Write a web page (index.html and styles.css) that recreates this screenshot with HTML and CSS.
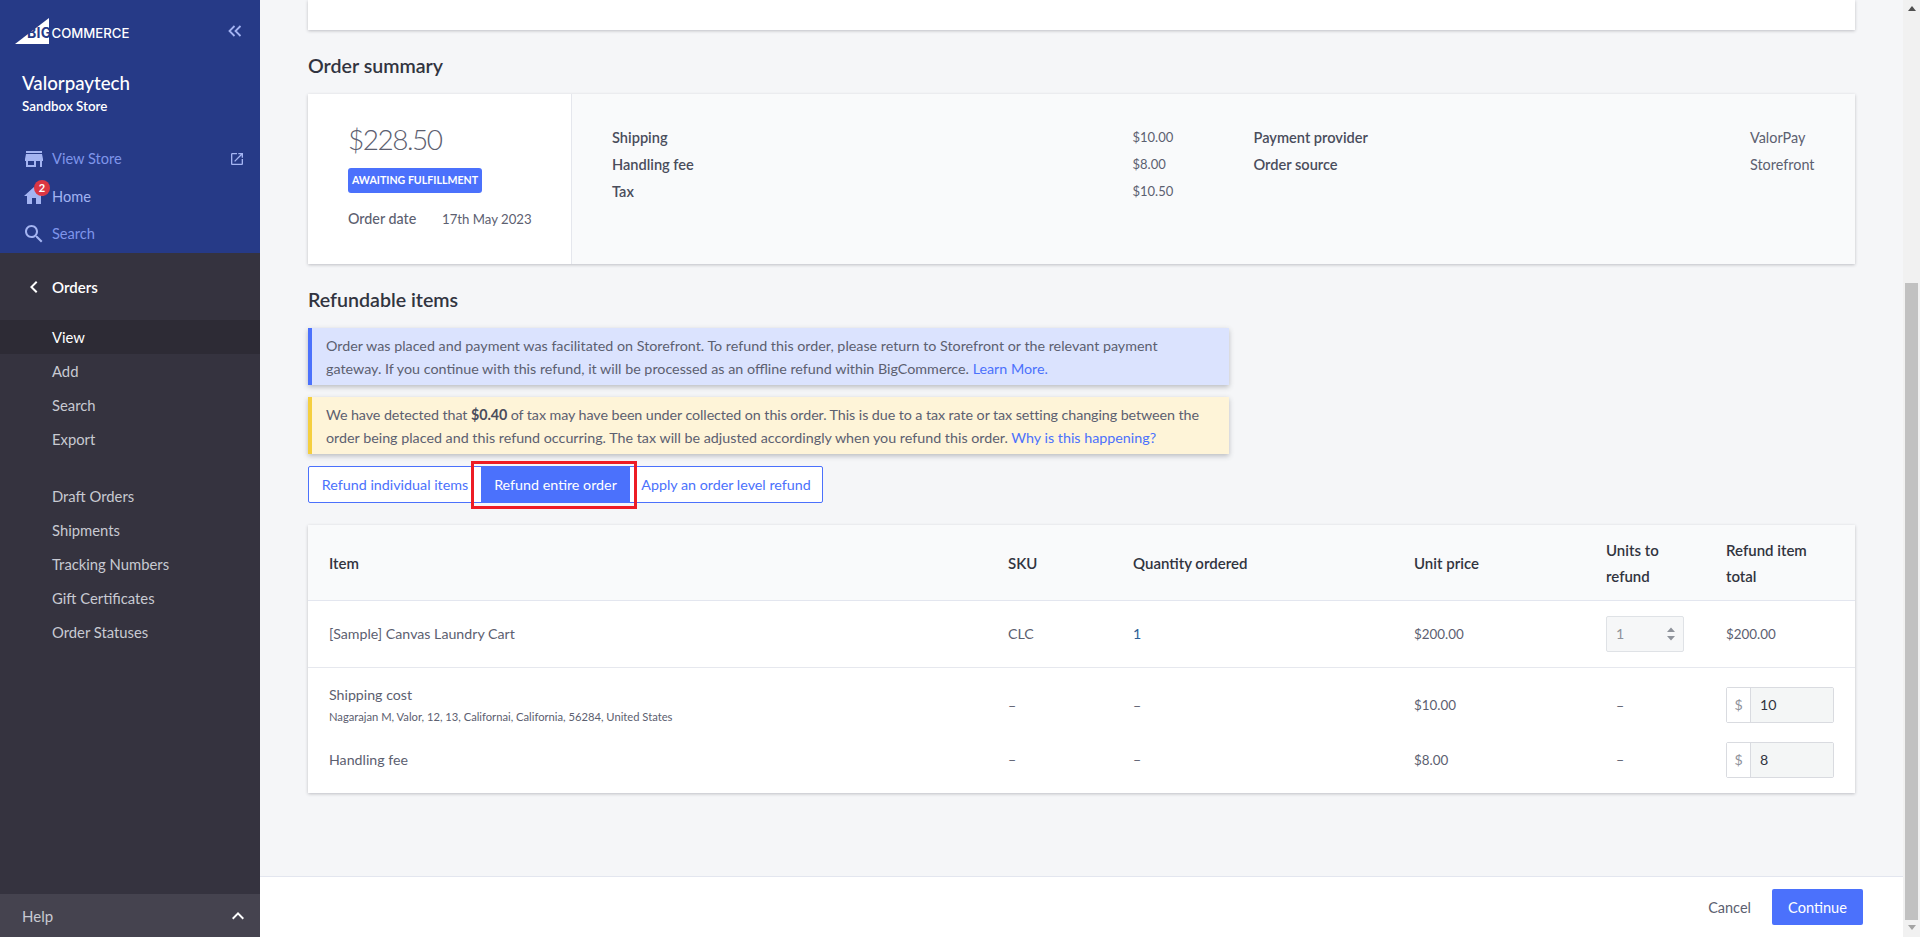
FILE: index.html
```html
<!DOCTYPE html>
<html lang="en">
<head>
<meta charset="utf-8">
<title>Refund order</title>
<link rel="stylesheet" href="styles.css">
</head>
<body>
<div class="app">
  <aside class="sidebar">
    <div class="side-top">
      <div class="brand">
        <div class="logo">
          <svg class="logo-tri" viewBox="0 0 34 26" width="34" height="26"><polygon points="0,26 34,0 34,26" fill="#fff"/></svg>
          <span class="logo-big">BIG</span><span class="logo-com">COMMERCE</span>
        </div>
        <svg class="collapse" viewBox="0 0 14 12" width="14" height="12"><path d="M6.5 1 1.5 6l5 5M12.5 1l-5 5 5 5" fill="none" stroke="#a4b4f2" stroke-width="1.8"/></svg>
      </div>
      <div class="store">
        <div class="store-name">Valorpaytech</div>
        <div class="store-sub">Sandbox Store</div>
      </div>
      <nav class="top-nav">
        <a class="top-item">
          <svg class="ico" viewBox="0 0 24 24" width="24" height="24"><path fill="#a4b4f2" d="M20 4H4v2h16V4zm1 10v-2l-1-5H4l-1 5v2h1v6h10v-6h4v6h2v-6h1zm-9 4H6v-4h6v4z"/></svg>
          <span class="top-label">View Store</span>
          <svg class="ext" viewBox="0 0 24 24" width="16" height="16"><path fill="#a4b4f2" d="M19 19H5V5h7V3H5c-1.11 0-2 .9-2 2v14c0 1.1.89 2 2 2h14c1.1 0 2-.9 2-2v-7h-2v7zM14 3v2h3.59l-9.83 9.83 1.41 1.41L19 6.41V10h2V3h-7z"/></svg>
        </a>
        <a class="top-item top-item-light">
          <svg class="ico" viewBox="0 0 24 24" width="24" height="24"><path fill="#a4b4f2" d="M10 20v-6h4v6h5v-8h3L12 3 2 12h3v8z"/></svg>
          <span class="top-label">Home</span>
          <span class="badge-count">2</span>
        </a>
        <a class="top-item">
          <svg class="ico" viewBox="0 0 24 24" width="24" height="24"><path fill="#a4b4f2" d="M15.5 14h-.79l-.28-.27C15.41 12.59 16 11.11 16 9.5 16 5.91 13.09 3 9.5 3S3 5.91 3 9.5 5.91 16 9.5 16c1.61 0 3.09-.59 4.23-1.57l.27.28v.79l5 4.99L20.49 19l-4.99-5zm-6 0C7.01 14 5 11.99 5 9.5S7.01 5 9.5 5 14 7.01 14 9.5 11.99 14 9.5 14z"/></svg>
          <span class="top-label">Search</span>
        </a>
      </nav>
    </div>
    <div class="side-dark">
      <div class="orders-head">
        <svg class="ico" viewBox="0 0 24 24" width="24" height="24"><path fill="#fff" d="M15.41 7.41L14 6l-6 6 6 6 1.41-1.41L10.83 12z"/></svg>
        <span>Orders</span>
      </div>
      <ul class="sub-nav">
        <li class="sub-item active">View</li>
        <li class="sub-item">Add</li>
        <li class="sub-item">Search</li>
        <li class="sub-item">Export</li>
      </ul>
      <ul class="sub-nav sub-nav-2">
        <li class="sub-item">Draft Orders</li>
        <li class="sub-item">Shipments</li>
        <li class="sub-item">Tracking Numbers</li>
        <li class="sub-item">Gift Certificates</li>
        <li class="sub-item">Order Statuses</li>
      </ul>
      <div class="help">
        <span>Help</span>
        <svg viewBox="0 0 24 24" width="24" height="24"><path fill="#fff" d="M12 8l-6 6 1.41 1.41L12 10.83l4.59 4.58L18 14z"/></svg>
      </div>
    </div>
  </aside>

  <main class="main">
    <div class="content">
      <div class="card top-stub"></div>

      <h2 class="section-title">Order summary</h2>
      <section class="card summary">
        <div class="summary-left">
          <div class="total">$228.50</div>
          <span class="status">AWAITING FULFILLMENT</span>
          <div class="order-date"><span class="od-label">Order date</span><span class="od-value">17th May 2023</span></div>
        </div>
        <div class="summary-right">
          <dl class="facts facts-a">
            <dt>Shipping</dt><dd>$10.00</dd>
            <dt>Handling fee</dt><dd>$8.00</dd>
            <dt>Tax</dt><dd>$10.50</dd>
          </dl>
          <dl class="facts facts-b">
            <dt>Payment provider</dt><dd>ValorPay</dd>
            <dt>Order source</dt><dd>Storefront</dd>
          </dl>
        </div>
      </section>

      <h2 class="section-title">Refundable items</h2>
      <div class="alert alert-info">Order was placed and payment was facilitated on Storefront. To refund this order, please return to Storefront or the relevant payment<br>gateway. If you continue with this refund, it will be processed as an offline refund within BigCommerce. <a class="link">Learn More.</a></div>
      <div class="alert alert-warn"><span class="tight">We have detected that <b>$0.40</b> of tax may have been under collected on this order. This is due to a tax rate or tax setting changing between the</span><br>order being placed and this refund occurring. The tax will be adjusted accordingly when you refund this order. <a class="link">Why is this happening?</a></div>

      <div class="segments">
        <button class="seg seg-1">Refund individual items</button>
        <button class="seg seg-2 seg-on">Refund entire order<span class="annot"></span></button>
        <button class="seg seg-3">Apply an order level refund</button>
      </div>

      <table class="card items">
        <thead>
          <tr>
            <th class="c-item">Item</th>
            <th class="c-sku">SKU</th>
            <th class="c-qty">Quantity ordered</th>
            <th class="c-price">Unit price</th>
            <th class="c-units">Units to<br>refund</th>
            <th class="c-total">Refund item<br>total</th>
          </tr>
        </thead>
        <tbody>
          <tr class="row-product">
            <td class="c-item">[Sample] Canvas Laundry Cart</td>
            <td>CLC</td>
            <td class="qty">1</td>
            <td class="num">$200.00</td>
            <td>
              <div class="spin"><span class="spin-val">1</span>
                <svg viewBox="0 0 10 16" width="10" height="16"><path fill="#8f939b" d="M5 1.5 9 6H1zM5 14.5 1 10h8z"/></svg>
              </div>
            </td>
            <td class="num">$200.00</td>
          </tr>
          <tr class="row-ship">
            <td class="c-item">Shipping cost<div class="addr">Nagarajan M, Valor, 12, 13, Californai, California, 56284, United States</div></td>
            <td>–</td>
            <td>–</td>
            <td class="num">$10.00</td>
            <td class="dash">–</td>
            <td><div class="money"><span class="cur">$</span><span class="amt">10</span></div></td>
          </tr>
          <tr class="row-hand">
            <td class="c-item">Handling fee</td>
            <td>–</td>
            <td>–</td>
            <td class="num">$8.00</td>
            <td class="dash">–</td>
            <td><div class="money"><span class="cur">$</span><span class="amt">8</span></div></td>
          </tr>
        </tbody>
      </table>
    </div>
    <footer class="footer">
      <a class="cancel">Cancel</a>
      <button class="continue">Continue</button>
    </footer>
  </main>

  <div class="scrollbar">
    <span class="arrow arrow-up"></span>
    <span class="thumb"></span>
    <span class="arrow arrow-down"></span>
  </div>
</div>
</body>
</html>
```
FILE: styles.css
```css
* { box-sizing: border-box; }
html, body { margin: 0; height: 100%; overflow: hidden; }
body { font-family: "Lato", "Noto Sans", sans-serif; font-size: 14px; color: #5c6070; background: #f5f6f8; }
.app { display: flex; height: 937px; }

/* sidebar */
.sidebar { width: 260px; flex: none; display: flex; flex-direction: column; background: #35333f; }
.side-top { height: 253px; flex: none; background: #263a87; color: #fff; }
.brand { height: 62px; display: flex; align-items: center; justify-content: space-between; padding: 0 18px 0 15px; }
.logo { position: relative; display: flex; align-items: center; height: 26px; width: 118px; padding-left: 12px; }
.logo-tri { position: absolute; left: 0; top: 0; }
.logo-big { position: relative; color: #263a87; font-size: 14px; font-weight: 700; line-height: 26px; padding-top: 4px; width: 24.5px; font-family: "Inter", sans-serif; letter-spacing: .3px; }
.logo-com { color: #fff; font-size: 13.2px; font-weight: 500; line-height: 26px; padding-top: 4px; font-family: "Inter", sans-serif; }
.collapse { margin-top: -1px; }
.store { padding: 8px 22px 0; height: 78px; }
.store-name { font-size: 18.7px; line-height: 26px; font-weight: 500; }
.store-sub { font-size: 13.4px; line-height: 20px; font-weight: 600; }
.top-item { position: relative; display: flex; align-items: center; height: 37.6px; padding: 0 15px 0 22px; color: #7f95ea; font-size: 14.6px; }
.top-item-light { color: #a2b3f2; }
.top-label { margin-left: 6px; flex: 1; }
.badge-count { position: absolute; left: 34px; top: 2px; width: 16px; height: 16px; border-radius: 50%; background: #db3643; color: #fff; font-size: 11px; font-weight: 700; line-height: 16px; text-align: center; }
.side-dark { flex: 1; display: flex; flex-direction: column; color: #c8cad2; }
.orders-head { height: 34px; margin-top: 17px; display: flex; align-items: center; padding-left: 22px; color: #fff; font-size: 15px; font-weight: 600; }
.orders-head span { margin-left: 6px; }
.sub-nav { list-style: none; margin: 16px 0 0; padding: 0; }
.sub-nav-2 { margin-top: 23px; }
.sub-item { height: 34px; line-height: 34px; padding-left: 52px; font-size: 14.8px; }
.sub-item.active { background: #2d2b35; color: #fff; }
.help { margin-top: auto; height: 43px; background: #45434f; display: flex; align-items: center; justify-content: space-between; padding: 0 10px 0 22px; font-size: 15px; }

/* main */
.main { flex: 1; min-width: 0; display: flex; flex-direction: column; }
.content { flex: 1; min-height: 0; padding: 0 48px; overflow: hidden; }
.card { background: #fff; box-shadow: 0 1px 3px rgba(49, 52, 64, .28); }
.top-stub { height: 30px; }
.section-title { margin: 22px 0 14px; font-size: 19.6px; line-height: 28px; font-weight: 600; color: #313440; }
.summary { display: flex; height: 170px; }
.summary-left { width: 264px; flex: none; padding: 20px 0 0 40px; border-right: 1px solid #e5e7ed; }
.total { font-size: 28px; line-height: 50px; font-weight: 300; color: #5c6070; letter-spacing: -1.5px; }
.status { display: inline-block; margin-top: 4px; height: 25px; width: 134px; line-height: 25px; border-radius: 3px; background: #4b71fc; color: #fff; font-size: 10.6px; font-weight: 700; text-align: center; white-space: nowrap; }
.order-date { margin-top: 14px; display: flex; font-size: 14.3px; line-height: 24px; }
.od-label { width: 94px; font-weight: 500; }
.od-value { font-size: 13.2px; }
.summary-right { flex: 1; display: flex; background: #f9fafb; padding: 30px 40px 0 40px; gap: 80px; }
.facts { margin: 0; display: grid; grid-template-columns: 1fr auto; grid-auto-rows: 27px; align-content: start; flex: 1; line-height: 27px; }
.facts dt { font-weight: 600; color: #4a4d5c; font-size: 14.6px; }
.facts dd { margin: 0; }
.facts-a dd { width: 41px; font-size: 13px; }
.facts-b dd { width: 65px; font-size: 14.4px; }

.alert { width: 921px; height: 57px; padding: 6px 14px 5px; margin-bottom: 12px; line-height: 23px; font-size: 14.3px; white-space: nowrap; box-shadow: 0 2px 5px rgba(49, 52, 64, .3); }
.alert-info { background: #dbe3fe; border-left: 4px solid #4b71fc; }
.alert-warn { background: #fef4d8; border-left: 4px solid #f5cf3f; }
.alert b { font-weight: 700; color: #4a4d5c; }
.tight { letter-spacing: -.08px; }
.link { color: #4b71fc; }

.segments { display: flex; height: 37px; width: 515px; margin-bottom: 22px; border: 1px solid #4b71fc; border-radius: 2px; background: #fff; }
.seg { position: relative; border: 0; background: transparent; color: #4b71fc; font: inherit; font-size: 14.3px; padding: 0; white-space: nowrap; }
.seg-1 { width: 172px; }
.seg-2 { width: 149px; }
.seg-3 { flex: 1; }
.seg-on { background: #4b71fc; color: #fff; }
.annot { position: absolute; left: -10px; right: -7px; top: -6px; bottom: -7px; border: 3px solid #ed1c24; }

.items { width: 100%; border-collapse: collapse; table-layout: fixed; }
.items th { height: 75px; background: #f9fafb; border-bottom: 1px solid #e3e6ef; text-align: left; font-weight: 600; font-size: 15px; line-height: 26px; color: #313440; padding: 1px 0 0; }
.items td { padding: 0; font-size: 14.2px; vertical-align: middle; }
.items td.num { font-size: 13.4px; }
.c-item { padding-left: 21px !important; width: 700px; }
.c-sku { width: 125px; }
.c-qty { width: 281px; }
.c-price { width: 192px; }
.c-units { width: 120px; }
.c-total { width: 129px; }
.row-product td { height: 67px; border-bottom: 1px solid #e6e8ee; }
.qty { color: #2d5f96; }
.row-ship td { height: 65px; padding-top: 11px; }
.row-hand td { height: 61px; padding-bottom: 6px; }
.addr { margin-top: 6px; font-size: 11.2px; line-height: 16px; }
.dash { padding-left: 10px !important; }
.spin { width: 78px; height: 36px; border: 1px solid #dfe2e6; border-radius: 2px; background: #f6f7f8; display: flex; align-items: center; justify-content: space-between; padding: 0 7px 0 9px; color: #8f939b; }
.money { width: 108px; height: 36px; display: flex; border: 1px solid #d9dbe0; border-radius: 2px; }
.cur { width: 24px; flex: none; border-right: 1px solid #d9dbe0; background: #fff; color: #8f939b; text-align: center; line-height: 34px; }
.amt { flex: 1; background: #f4f6f6; color: #313440; padding-left: 9px; line-height: 34px; }

.footer { height: 61px; flex: none; background: #fff; border-top: 1px solid #e3e6ef; display: flex; align-items: center; justify-content: flex-end; gap: 21px; padding-right: 40px; }
.cancel { color: #5c6070; font-size: 14.5px; }
.continue { width: 91px; height: 36px; border: 0; border-radius: 2px; background: #4b71fc; color: #fff; font: inherit; font-size: 14.6px; }

/* scrollbar */
.scrollbar { width: 17px; flex: none; background: #f1f1f1; display: flex; flex-direction: column; align-items: center; padding: 6px 0; }
.thumb { width: 13px; height: 637px; margin-top: 272px; margin-bottom: 5px; background: #c1c1c1; }
.arrow { width: 0; height: 0; border-left: 4px solid transparent; border-right: 4px solid transparent; }
.arrow-up { border-bottom: 5px solid #505050; }
.arrow-down { border-top: 5px solid #a3a3a3; }
```
